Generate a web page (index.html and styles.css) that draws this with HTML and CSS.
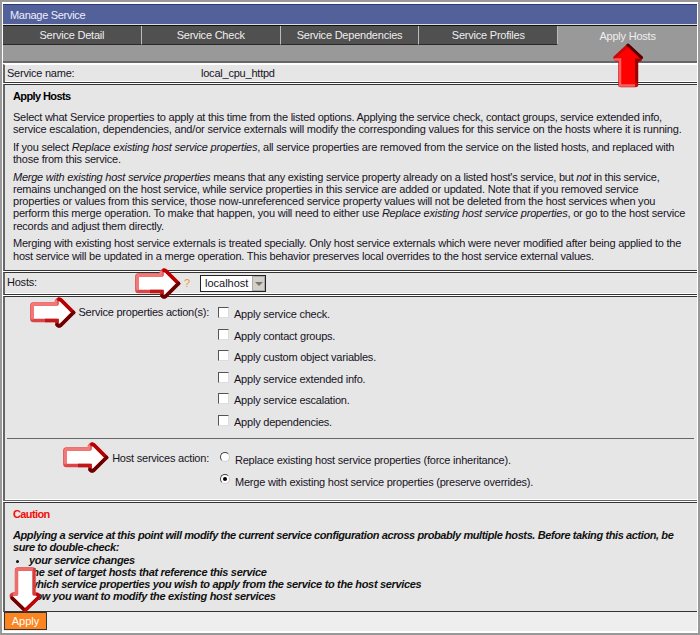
FILE: index.html
```html
<!DOCTYPE html>
<html lang="en">
<head>
<meta charset="utf-8">
<title>Manage Service</title>
<link rel="stylesheet" href="styles.css">
</head>
<body>
<svg class="defs" width="0" height="0" aria-hidden="true">
  <defs>
    <symbol id="arrow" viewBox="0 0 46 31">
      <path d="M2 8.500Q2 7 3.500 7H27V3.500Q28.500 1 31 3L43.500 15.500L31 28Q28.500 30 27 27.500V23.500H3.500Q2 23.500 2 22Z" fill="#fff" stroke="#dc4545" stroke-width="3.600" stroke-linejoin="round"/>
      <path d="M2.500 21V8Q2.500 7 4 7H26V4" fill="none" stroke="#f37878" stroke-width="3" stroke-linecap="round"/>
      <path d="M29 2.300L31 3L43.500 15.500" fill="none" stroke="#b80000" stroke-width="3.600" stroke-linecap="round"/>
      <path d="M43.500 15.500L31 28Q28.500 30 27 27.500" fill="none" stroke="#6a0000" stroke-width="3.600" stroke-linecap="round"/>
      <path d="M15 23.500H27V26" fill="none" stroke="#c01818" stroke-width="3.600"/>
    </symbol>
  </defs>
</svg>
<main class="window">
  <h1 class="title">Manage Service</h1>
  <nav class="tabs">
    <a class="tab">Service Detail</a><a class="tab">Service Check</a><a class="tab">Service Dependencies</a><a class="tab">Service Profiles</a>
    <a class="tab active">Apply Hosts
      <svg class="pointer up" width="32" height="46" viewBox="0 0 32 46">
        <path d="M16 2L29.500 14.500L28.500 17H25V42Q25 43 23 43H9Q7.500 43 7.500 42V17H3.500L2.500 14.500Z" fill="red" stroke="#c80808" stroke-width="2.500" stroke-linejoin="round"/>
        <path d="M16 2L29.500 14.500" stroke="#500000" stroke-width="3" stroke-linecap="round"/>
        <path d="M28.500 17H24.500V40" fill="none" stroke="#960000" stroke-width="3"/>
        <path d="M3 16.500H8V42.500H22" fill="none" stroke="#f86060" stroke-width="2.500" stroke-linecap="round"/>
      </svg>
    </a>
  </nav>
  <section class="row name"><span class="label">Service name:</span><span>local_cpu_httpd</span></section>
  <section class="panel info">
    <h2>Apply Hosts</h2>
    <p><span class="tight">Select what Service properties to apply at this time from the listed options. Applying the service check, contact groups, service extended info,</span><br><span class="loose">service escalation, dependencies, and/or service externals will modify the corresponding values for this service on the hosts where it is running.</span></p>
    <p>If you select <i>Replace existing host service properties</i>, all service properties are removed from the service on the listed hosts, and replaced with<br>those from this service.</p>
    <p><span class="tight"><i>Merge with existing host service properties</i> means that any existing service property already on a listed host's service, but <i>not</i> in this service,</span><br>remains unchanged on the host service, while service properties in this service are added or updated. Note that if you removed service<br>properties or values from this service, those now-unreferenced service property values will not be deleted from the host services when you<br>perform this merge operation. To make that happen, you will need to either use <i>Replace existing host service properties</i>, or go to the host service<br>records and adjust them directly.</p>
    <p>Merging with existing host service externals is treated specially. Only host service externals which were never modified after being applied to the<br>host service will be updated in a merge operation. This behavior preserves local overrides to the host service external values.</p>
  </section>
  <section class="row hosts">
    <span class="label">Hosts:</span><span class="help">?</span>
    <div class="select"><span>localhost</span><b class="drop"></b></div>
    <svg class="pointer hosts-arrow" width="46" height="31"><use href="#arrow"/></svg>
  </section>
  <section class="panel actions">
    <div class="group">
      <div class="caption">Service properties action(s):</div>
      <div class="options">
        <label><i class="check"></i>Apply service check.</label>
        <label><i class="check"></i>Apply contact groups.</label>
        <label><i class="check"></i>Apply custom object variables.</label>
        <label><i class="check"></i>Apply service extended info.</label>
        <label><i class="check"></i>Apply service escalation.</label>
        <label><i class="check"></i>Apply dependencies.</label>
      </div>
      <svg class="pointer service-arrow" width="46" height="31"><use href="#arrow"/></svg>
    </div>
    <div class="group second">
      <div class="caption">Host services action:</div>
      <div class="options">
        <label><i class="radio"></i>Replace existing host service properties (force inheritance).</label>
        <label><i class="radio on"></i>Merge with existing host service properties (preserve overrides).</label>
      </div>
      <svg class="pointer action-arrow" width="46" height="31"><use href="#arrow"/></svg>
    </div>
  </section>
  <section class="panel caution">
    <h2>Caution</h2>
    <p>Applying a service at this point will modify the current service configuration across probably multiple hosts. Before taking this action, be<br>sure to double-check:</p>
    <ul><li>your service changes</li><li>the set of target hosts that reference this service</li><li>which service properties you wish to apply from the service to the host services</li><li>how you want to modify the existing host services</li></ul>
  </section>
  <footer class="footer">
    <button class="apply">Apply</button>
    <svg class="pointer down" width="32" height="46" viewBox="0 0 32 46">
      <path d="M9 2H23.500Q25 2 25 3.500V27H28Q31 28 29 31L16 43.500L3 31Q1 28 4 27H7.500V3.500Q7.500 2 9 2Z" fill="#fff" stroke="#d83b3b" stroke-width="3.400" stroke-linejoin="round"/>
      <path d="M24 2H9Q7.500 2 7.500 3.500V27H4" fill="none" stroke="#ef6a6a" stroke-width="3"/>
      <path d="M3 31L16 43.500" stroke="#700000" stroke-width="3.400" stroke-linecap="round"/>
      <path d="M16 43.500L29 31Q30.500 28.500 28.500 27.500" fill="none" stroke="#b80808" stroke-width="3.400" stroke-linecap="round"/>
    </svg>
  </footer>
</main>
</body>
</html>
```
FILE: styles.css
```css
* { box-sizing: border-box; }
body { margin: 0; width: 700px; height: 635px; overflow: hidden; background: #fff; color: #171324; font: 11px/12.3px "Liberation Sans", Arial, sans-serif; letter-spacing: -0.22px; white-space: nowrap; }
.defs { position: absolute; }
.window { width: 700px; height: 635px; border: 2px solid #999; padding: 1px; }
h1, h2, p, ul { margin: 0; }
.title { height: 21px; margin-top: 1px; padding: 0 7px; background: #526199; border-top: 1px solid #303878; border-bottom: 1px solid #ddd; color: #eef; font-size: 11px; font-weight: normal; line-height: 20px; letter-spacing: -0.3px; }
.tabs { display: flex; height: 38px; background: #999; border-top: 1px solid #111; border-bottom: 2px solid #66676b; color: #eee; }
.tab { width: 139px; height: 19px; text-align: center; line-height: 18px; background: #505050; border-right: 1px solid #bbb; border-bottom: 1px solid #292929; }
.active { position: relative; background: none; border: 0; line-height: 20px; }
.row { display: flex; align-items: center; background: #e6e6e6; border: 1px solid #333; border-left: 2px solid #666; border-right: 0; padding-left: 2px; position: relative; box-shadow: inset 0 -1px #fff; }
.name { height: 19px; margin-top: 1px; border-top-color: #fff; }
.label { width: 194px; }
.panel { background: #e6e6e6; border: 1px solid #333; border-left: 2px solid #666; border-right: 0; margin-top: 1px; position: relative; }
.info { height: 187px; padding: 5px 8px; }
.tight { letter-spacing: -0.245px; }
.loose { letter-spacing: -0.195px; }
h2 { font-size: 11px; line-height: 13px; letter-spacing: -0.6px; color: #000; }
.info h2 { margin-bottom: 8px; }
.info p + p { margin-top: 5.2px; }
.hosts { height: 23px; margin-top: 1px; }
.hosts .label { width: 177px; margin-top: -2px; }
.help { width: 16px; color: #e49a35; margin-top: -1px; }
.select { display: flex; width: 66px; height: 17px; border: 1px solid #222; background: #fff; padding-left: 4px; line-height: 15px; justify-content: space-between; letter-spacing: 0; }
.drop { width: 13px; background: #d4d0c8; border: 1px solid #aaa; display: grid; place-items: center; }
.drop::after { content: ""; border: 4px solid transparent; border-top-color: #777; border-bottom: 0; }
.actions { height: 205px; padding: 0 3px 0 2px; border-bottom-color: #666; box-shadow: inset 0 -1px #fff; }
.group { display: flex; height: 142px; padding-top: 6px; position: relative; border-bottom: 1px solid #666; }
.caption { width: 202px; text-align: right; line-height: 19px; }
.options { padding-left: 9px; }
.options label { display: flex; height: 21.5px; line-height: 22px; }
.check { width: 11px; height: 11px; margin: 4px 5px 0 0; background: #fff; border: 1px solid #ddd; border-top-color: #555; border-left-color: #555; }
.second { border: 0; height: 60px; padding-top: 10px; }
.radio { width: 10px; height: 10px; margin: 3px 5px 0 2px; border-radius: 50%; background: #fff; border: 1px solid #ccc; border-top-color: #444; border-left-color: #444; display: grid; place-items: center; }
.on::after { content: ""; width: 4px; height: 4px; border-radius: 50%; background: #000; }
.caution { height: 110px; padding: 5px 8px; color: #111; }
.caution h2 { color: #f01008; margin-bottom: 8px; }
.caution p, .caution ul { font-weight: bold; font-style: italic; letter-spacing: -0.33px; }
.caution p { letter-spacing: -0.4px; }
.caution ul { padding-left: 16px; }
.footer { background: #eee; height: 19px; position: relative; padding-left: 1px; }
.apply { display: block; width: 43px; height: 18px; padding: 0; border: 1px solid #333; background: #fc8520; color: #fff; font: 11px/15px "Liberation Sans", Arial, sans-serif; }
.pointer { position: absolute; z-index: 2; }
.up { left: 54px; top: 17px; }
.hosts-arrow { left: 130px; top: -5px; }
.service-arrow { left: 23px; top: 0; }
.action-arrow { left: 56px; top: 3px; }
.down { left: 6px; bottom: 18px; }
```
